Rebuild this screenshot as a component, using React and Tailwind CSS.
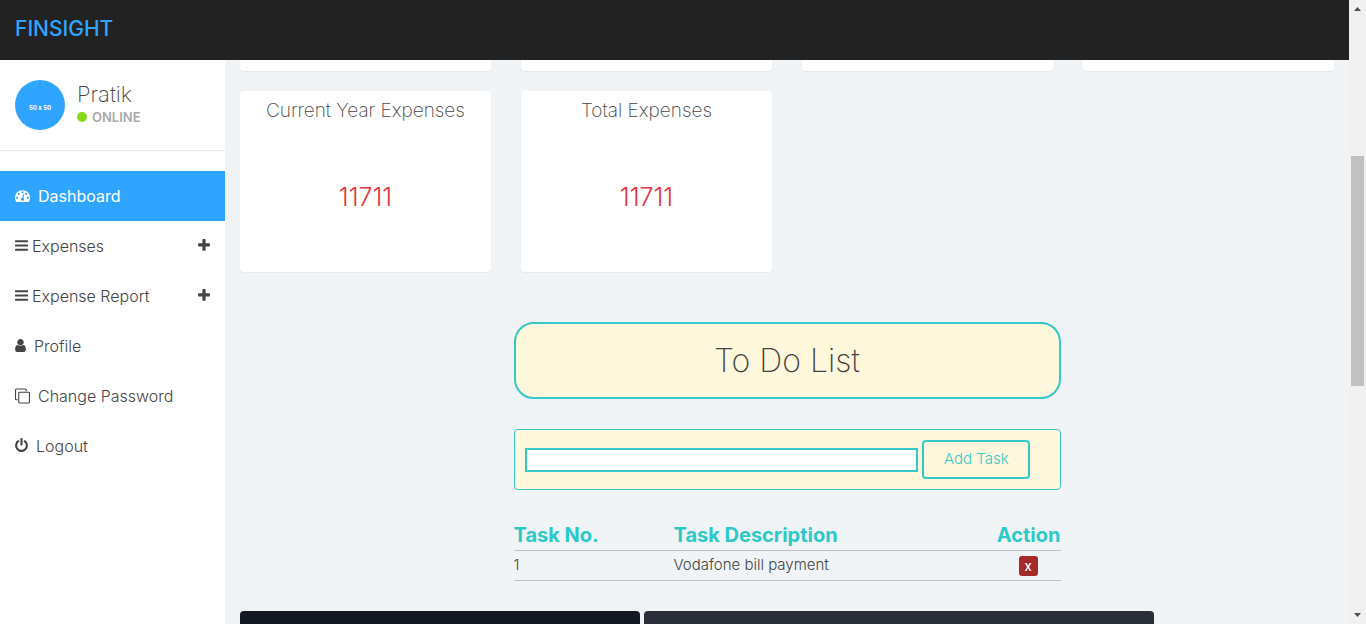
import React from "react";

const ICONS = {
  dashboard: {
    box: "0 119 1792 1792",
    size: "w-[15px] h-[15px]",
    d: "M384 1152q0-53-37.5-90.5t-90.5-37.5-90.5 37.5-37.5 90.5 37.5 90.5 90.5 37.5 90.5-37.5 37.5-90.5zm192-448q0-53-37.5-90.5t-90.5-37.5-90.5 37.5-37.5 90.5 37.5 90.5 90.5 37.5 90.5-37.5 37.5-90.5zm428 481l101-382q6-26-7.5-48.5t-38.5-29.5-48 6.5-30 39.5l-101 382q-60 5-107 43.5t-63 98.5q-20 77 20 146t117 89 146-20 89-117q16-60-6-117t-72-91zm660-33q0-53-37.5-90.5t-90.5-37.5-90.5 37.5-37.5 90.5 37.5 90.5 90.5 37.5 90.5-37.5 37.5-90.5zm-640-640q0-53-37.5-90.5t-90.5-37.5-90.5 37.5-37.5 90.5 37.5 90.5 90.5 37.5 90.5-37.5 37.5-90.5zm448 192q0-53-37.5-90.5t-90.5-37.5-90.5 37.5-37.5 90.5 37.5 90.5 90.5 37.5 90.5-37.5 37.5-90.5zm320 448q0 261-141 483-19 29-54 29h-1402q-35 0-54-29-141-221-141-483 0-182 71-348t191-286 286-191 348-71 348 71 286 191 191 286 71 348z",
  },
  bars: {
    box: "128 119 1536 1792",
    size: "w-[13px] h-[15px]",
    d: "M1664 1344v128q0 26-19 45t-45 19h-1408q-26 0-45-19t-19-45v-128q0-26 19-45t45-19h1408q26 0 45 19t19 45zm0-512v128q0 26-19 45t-45 19h-1408q-26 0-45-19t-19-45v-128q0-26 19-45t45-19h1408q26 0 45 19t19 45zm0-512v128q0 26-19 45t-45 19h-1408q-26 0-45-19t-19-45v-128q0-26 19-45t45-19h1408q26 0 45 19t19 45z",
  },
  plus: {
    box: "192 119 1408 1792",
    size: "w-[12px] h-[15px]",
    d: "M1600 736v192q0 40-28 68t-68 28h-416v416q0 40-28 68t-68 28h-192q-40 0-68-28t-28-68v-416h-416q-40 0-68-28t-28-68v-192q0-40 28-68t68-28h416v-416q0-40 28-68t68-28h192q40 0 68 28t28 68v416h416q40 0 68 28t28 68z",
  },
  user: {
    box: "256 119 1280 1792",
    size: "w-[11px] h-[15px]",
    d: "M1536 1399q0 109-62.5 187t-150.5 78h-854q-88 0-150.5-78t-62.5-187q0-85 8.5-160.5t31.5-152 58.5-131 94-89 134.5-34.5q131 128 313 128t313-128q76 0 134.5 34.5t94 89 58.5 131 31.5 152 8.5 160.5zm-256-887q0 159-112.5 271.5t-271.5 112.5-271.5-112.5-112.5-271.5 112.5-271.5 271.5-112.5 271.5 112.5 112.5 271.5z",
  },
  clone: {
    box: "0 60 1792 1792",
    size: "w-[15px] h-[15px]",
    d: "M1664 1632v-1088q0-13-9.500-22.500t-22.500-9.500h-1088q-13 0-22.500 9.500t-9.500 22.500v1088q0 13 9.500 22.500t22.500 9.500h1088q13 0 22.500-9.500t9.500-22.500zm128-1088v1088q0 66-47 113t-113 47h-1088q-66 0-113-47t-47-113v-1088q0-66 47-113t113-47h1088q66 0 113 47t47 113zm-384-384v160h-128v-160q0-13-9.500-22.500t-22.500-9.500h-1088q-13 0-22.500 9.500t-9.500 22.500v1088q0 13 9.500 22.500t22.500 9.500h160v128h-160q-66 0-113-47t-47-113v-1088q0-66 47-113t113-47h1088q66 0 113 47t47 113z",
  },
  power: {
    box: "128 119 1536 1792",
    size: "w-[13px] h-[15px]",
    d: "M1664 896q0 156-61 298t-164 245-245 164-298 61-298-61-245-164-164-245-61-298q0-182 80.500-343t226.500-270q43-32 95.500-25t83.500 50q32 42 24.500 94.500t-49.500 84.500q-98 74-151.500 181t-53.500 228q0 104 40.500 198.500t109.500 163.500 163.500 109.500 198.500 40.500 198.500-40.500 163.500-109.500 109.500-163.500 40.500-198.500q0-121-53.500-228t-151.500-181q-42-32-49.500-84.500t24.500-94.500q31-43 84-50t95 25q146 109 226.500 270t80.500 343zm-640-768v640q0 52-38 90t-90 38-90-38-38-90v-640q0-52 38-90t90-38 90 38 38 90z",
  },
};

function Icon({ name }) {
  const icon = ICONS[name];
  return (
    <svg viewBox={icon.box} className={`${icon.size} shrink-0 overflow-visible fill-current`} aria-hidden="true">
      <path d={icon.d} />
    </svg>
  );
}

const NAV = [
  { label: "Dashboard", icon: "dashboard", gap: "gap-2", active: true },
  { label: "Expenses", icon: "bars", gap: "gap-1", expandable: true },
  { label: "Expense Report", icon: "bars", gap: "gap-1", expandable: true },
  { label: "Profile", icon: "user", gap: "gap-2" },
  { label: "Change Password", icon: "clone", gap: "gap-2" },
  { label: "Logout", icon: "power", gap: "gap-2" },
];

function Sidebar() {
  return (
    <aside className="w-[225px] shrink-0 bg-white">
      <div className="flex gap-3 border-b border-[#e9ecf2] px-[15px] py-5">
        <div className="flex size-[50px] items-center justify-center rounded-full bg-[#30a5ff] pt-1 text-[6px] font-bold text-white [font-variant-ligatures:none]">
          50 x 50
        </div>
        <div>
          <div className="text-[22px] leading-7 font-extralight">Pratik</div>
          <div className="flex items-center gap-[5px] text-[13px] leading-[18px] font-semibold text-[#aaa]">
            <span className="size-[10px] rounded-full bg-[#8ad919]" />
            ONLINE
          </div>
        </div>
      </div>
      <nav className="mt-5">
        {NAV.map((item) => (
          <a
            key={item.label}
            href="#"
            className={`flex h-[50px] items-center px-[15px] text-[16px] ${item.gap} ${
              item.active ? "bg-[#30a5ff] font-normal text-white" : "font-light text-[#444]"
            }`}
          >
            <Icon name={item.icon} />
            <span className="grow">{item.label}</span>
            {item.expandable && <Icon name="plus" />}
          </a>
        ))}
      </nav>
    </aside>
  );
}

function StatCard({ title, value }) {
  return (
    <section className="h-[181px] rounded bg-white pt-[6px] text-center shadow-[0_1px_1px_rgba(0,0,0,0.05)]">
      <h2 className="text-[19px] leading-7 font-extralight">{title}</h2>
      <p className="mt-[54px] text-[25px] leading-9 font-light text-[#e5343d]">{value}</p>
    </section>
  );
}

function TodoList() {
  return (
    <div className="mx-auto mt-[50px] w-1/2">
      <h1 className="rounded-[20px] border-2 border-[#33c9c9] bg-[#fff8dc] py-4 text-center text-[32px] leading-[41px] font-extralight">
        To Do List
      </h1>
      <form
        className="mt-[30px] flex items-center gap-1 rounded border border-[#33c9c9] bg-[#fff8dc] p-[10px]"
        onSubmit={(e) => e.preventDefault()}
      >
        <input aria-label="Task" className="h-6 w-3/4 border-2 border-[#33c9c9] bg-white px-1 text-sm outline-none" />
        <button className="h-[39px] w-[108px] rounded border-2 border-[#33c9c9] text-[15px] font-light text-[#33c9c9]">
          Add Task
        </button>
      </form>
      <table className="mt-[30px] w-full border-collapse text-left">
        <thead className="text-[20px] leading-[30px] font-bold text-[#2dc9c9]">
          <tr className="border-b border-[#bcc0c4]">
            <th className="w-[160px] p-0">Task No.</th>
            <th className="p-0">Task Description</th>
            <th className="w-[65px] p-0 text-right">Action</th>
          </tr>
        </thead>
        <tbody className="text-[15px] font-light">
          <tr className="h-[30px] border-b border-[#bcc0c4]">
            <td className="p-0">1</td>
            <td className="p-0">Vodafone bill payment</td>
            <td className="p-0">
              <button
                aria-label="Delete task"
                className="mx-auto flex h-5 w-[19px] items-center justify-center rounded-[3px] bg-[#a52a2a] text-[13px] leading-5 font-medium text-white"
              >
                x
              </button>
            </td>
          </tr>
        </tbody>
      </table>
    </div>
  );
}

function ScrollRail() {
  return (
    <div className="flex w-[17px] shrink-0 flex-col items-center bg-[#f1f1f1]" aria-hidden="true">
      <svg viewBox="0 0 17 17" className="size-[17px] fill-[#505050]">
        <path d="M5 11h7L8.500 7z" />
      </svg>
      <div className="flex w-full grow flex-col items-center">
        <div className="grow-[139]" />
        <div className="w-[13px] grow-[230] bg-[#c1c1c1]" />
        <div className="grow-[221]" />
      </div>
      <svg viewBox="0 0 17 17" className="size-[17px] fill-[#505050]">
        <path d="M5 6h7L8.500 10z" />
      </svg>
    </div>
  );
}

export default function App() {
  return (
    <div className="flex h-screen overflow-hidden bg-[#f0f4f7] font-['Inter','Liberation_Sans',sans-serif] text-[#444]">
      <div className="flex min-w-0 grow flex-col">
        <header className="flex h-[60px] shrink-0 items-center bg-[#222] px-[15px] pb-[3px]">
          <a href="#" className="text-[21px] font-medium text-[#30a5ff]">
            FINSIGHT
          </a>
        </header>
        <div className="flex min-h-0 grow">
          <Sidebar />
          <main className="min-w-0 grow overflow-hidden px-[15px]">
            <div className="grid grid-cols-4 gap-x-[30px] gap-y-5">
              {[0, 1, 2, 3].map((n) => (
                <div key={n} className="h-[11px] rounded-b bg-white shadow-[0_1px_1px_rgba(0,0,0,0.05)]" />
              ))}
              <StatCard title="Current Year Expenses" value="11711" />
              <StatCard title="Total Expenses" value="11711" />
            </div>
            <TodoList />
            <div className="mt-[30px] flex gap-1">
              <div className="h-10 w-[400px] rounded bg-[#131722]" />
              <div className="h-10 w-[510px] rounded bg-[#2a2e39]" />
            </div>
          </main>
        </div>
      </div>
      <ScrollRail />
    </div>
  );
}
